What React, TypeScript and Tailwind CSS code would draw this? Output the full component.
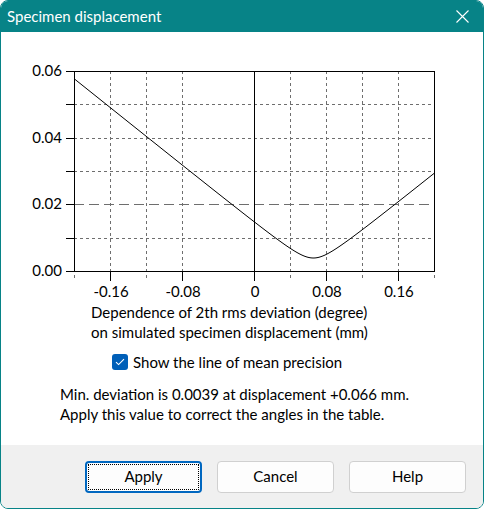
import React from 'react';

// plot geometry in page pixels
const X0 = 74;
const X1 = 434;
const Y0 = 71;
const Y1 = 271;
const yPx = (v: number) => Y1 - (v / 0.06) * (Y1 - Y0);

// rms deviation vs displacement, hyperbola around the minimum
const curve = (d: number) => Math.sqrt(0.0039 ** 2 + (0.2165 * (d - 0.066)) ** 2);

function buildPath() {
  const pts: string[] = [];
  for (let px = X0 + 1; px <= X1; px += 1) {
    const d = -0.2 + ((px - X0) / (X1 - X0)) * 0.4;
    pts.push(`${px.toFixed(1)},${yPx(curve(d)).toFixed(2)}`);
  }
  return 'M' + pts.join(' L');
}

const FONT = "Lato, 'Noto Sans', sans-serif";

const xGrid = [0, 1, 2, 3, 5, 6, 7, 8, 9, 10].map(i => X0 + i * 36);
const xLabels = [
  { v: '-0.16', x: 110 },
  { v: '-0.08', x: 182 },
  { v: '0', x: 254 },
  { v: '0.08', x: 326 },
  { v: '0.16', x: 398 },
];
const yTicks = [0, 1, 2, 3, 4, 5, 6].map(i => Y1 - (i * (Y1 - Y0)) / 6);
const yLabels = [
  { v: '0.06', y: yPx(0.06) },
  { v: '0.04', y: yPx(0.04) },
  { v: '0.02', y: yPx(0.02) },
  { v: '0.00', y: yPx(0) },
];

function Chart() {
  return (
    <svg width={482} height={270} viewBox="1 32 482 270" className="block">
      <g stroke="#6e6e6e" strokeWidth={1} strokeDasharray="3 3" shapeRendering="crispEdges">
        {xGrid.map(x => (
          <line key={x} x1={x + 0.5} y1={Y0} x2={x + 0.5} y2={279} />
        ))}
        {yTicks
          .filter((_, i) => i !== 0 && i !== 2 && i !== 6)
          .map(y => (
            <line key={y} x1={X0} y1={Math.round(y) + 0.5} x2={X1} y2={Math.round(y) + 0.5} />
          ))}
      </g>
      {/* mean precision line */}
      <line
        x1={X0}
        y1={204.5}
        x2={X1}
        y2={204.5}
        stroke="#6e6e6e"
        strokeDasharray="10 5"
        shapeRendering="crispEdges"
      />
      <g stroke="#000" strokeWidth={1} shapeRendering="crispEdges" fill="none">
        <rect x={X0 + 0.5} y={Y0 + 0.5} width={X1 - X0} height={Y1 - Y0} />
        <line x1={254.5} y1={Y0} x2={254.5} y2={281} />
        {xLabels.map(l => (
          <line key={l.x} x1={l.x + 0.5} y1={Y1} x2={l.x + 0.5} y2={281} />
        ))}
        {yTicks.map(y => (
          <line key={y} x1={66} y1={Math.round(y) + 0.5} x2={X0} y2={Math.round(y) + 0.5} />
        ))}
      </g>
      <path d={buildPath()} stroke="#000" strokeWidth={1} fill="none" />
      <g fontFamily={FONT} fontSize={15} fill="#000">
        {yLabels.map(l => (
          <text key={l.v} x={62} y={l.y + 5} textAnchor="end">
            {l.v}
          </text>
        ))}
        {xLabels.map(l => (
          <text key={l.v} x={l.x + 1} y={297} textAnchor="middle">
            {l.v}
          </text>
        ))}
      </g>
    </svg>
  );
}

function DialogButton({ label, focused }: { label: string; focused?: boolean }) {
  return (
    <button
      className={
        focused
          ? 'relative w-[117px] h-[32px] rounded-[4px] border-2 border-[#0067c0] bg-[#fdfdfd] text-[15px] text-black'
          : 'relative w-[117px] h-[32px] rounded-[4px] border border-[#d0d0d0] bg-[#fdfdfd] text-[15px] text-black'
      }
    >
      {focused && <span className="absolute inset-[1px] border border-dotted border-black" />}
      {label}
    </button>
  );
}

export default function App() {
  return (
    <div className="w-[484px] h-[509px] bg-white" style={{ fontFamily: FONT }}>
      <div className="flex flex-col h-full border border-[#078387] rounded-lg overflow-hidden">
        <div className="h-[31px] shrink-0 bg-[#078387] flex items-center justify-between pl-[6px] pr-[14px] text-white">
          <span className="text-[15px] leading-none">Specimen displacement</span>
          <svg width={13} height={13} viewBox="0 0 13 13" stroke="white" strokeWidth={1.1}>
            <path d="M0.5 0.5 L12.5 12.5 M12.5 0.5 L0.5 12.5" />
          </svg>
        </div>
        <div className="flex-1 bg-white text-[15px] text-black">
          <Chart />
          <div className="pl-[90px] leading-[20px]">
            <div>Dependence of 2th rms deviation (degree)</div>
            <div>on simulated specimen displacement (mm)</div>
          </div>
          <div className="flex items-center gap-[5px] pl-[111px] mt-[12px] h-[16px]">
            <span className="w-[16px] h-[16px] rounded-[3px] bg-[#005fb8] flex items-center justify-center">
              <svg width={10} height={8} viewBox="0 0 10 8" fill="none" stroke="white" strokeWidth={1.1}>
                <path d="M1 4.2 L3.6 6.6 L9 1.2" />
              </svg>
            </span>
            <span>Show the line of mean precision</span>
          </div>
          <div className="pl-[59px] mt-[14px] leading-[20px]">
            <div>Min. deviation is 0.0039 at displacement +0.066 mm.</div>
            <div>Apply this value to correct the angles in the table.</div>
          </div>
        </div>
        <div className="h-[63px] shrink-0 bg-[#f0f0f0] flex items-center justify-end gap-[15px] pr-[17px]">
          <DialogButton label="Apply" focused />
          <DialogButton label="Cancel" />
          <DialogButton label="Help" />
        </div>
      </div>
    </div>
  );
}
